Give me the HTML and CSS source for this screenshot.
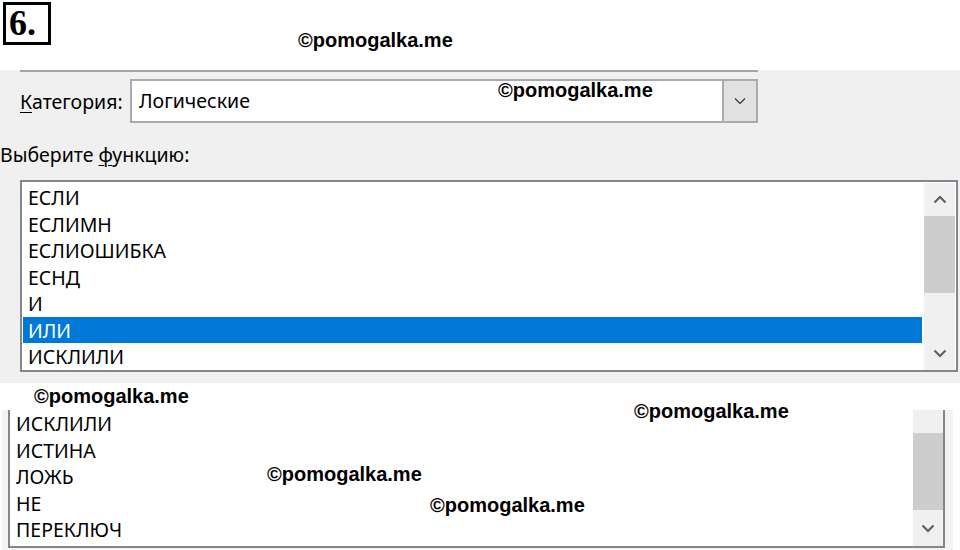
FILE: index.html
```html
<!DOCTYPE html>
<html lang="ru">
<head>
  <meta charset="UTF-8">
  <title>Вставка функции — Логические</title>
  <link rel="stylesheet" href="styles.css">
</head>
<body>
  <div class="page">
    <div class="task-num">6.</div>

    <!-- Function dialog, upper part -->
    <section class="dialog">
      <div class="rule"></div>
      <div class="cat-row">
        <span class="cat-label"><u>К</u>атегория:</span>
        <div class="combo">
          <span class="combo-value">Логические</span>
          <span class="combo-btn">
            <svg width="12" height="8" viewBox="0 0 12 8"><path d="M1 1.5 L6 6.5 L11 1.5" fill="none" stroke="#333" stroke-width="1.2"/></svg>
          </span>
        </div>
      </div>
      <div class="fn-label">Выберите <u>ф</u>ункцию:</div>
      <div class="listbox">
        <ul class="items">
          <li>ЕСЛИ</li>
          <li>ЕСЛИМН</li>
          <li>ЕСЛИОШИБКА</li>
          <li>ЕСНД</li>
          <li>И</li>
          <li class="selected">ИЛИ</li>
          <li>ИСКЛИЛИ</li>
        </ul>
        <div class="scrollbar">
          <span class="arrow">
            <svg width="14" height="9" viewBox="0 0 14 9"><path d="M1.5 7.5 L7 2 L12.5 7.5" fill="none" stroke="#606060" stroke-width="2.2"/></svg>
          </span>
          <span class="thumb"></span>
          <span class="track"></span>
          <span class="arrow">
            <svg width="14" height="9" viewBox="0 0 14 9"><path d="M1.5 1.5 L7 7 L12.5 1.5" fill="none" stroke="#606060" stroke-width="2.2"/></svg>
          </span>
        </div>
      </div>
    </section>

    <!-- Same list, scrolled down -->
    <section class="continued">
      <div class="listbox listbox-low">
        <ul class="items">
          <li>ИСКЛИЛИ</li>
          <li>ИСТИНА</li>
          <li>ЛОЖЬ</li>
          <li>НЕ</li>
          <li>ПЕРЕКЛЮЧ</li>
        </ul>
        <div class="scrollbar">
          <span class="track track-top"></span>
          <span class="thumb"></span>
          <span class="arrow">
            <svg width="14" height="9" viewBox="0 0 14 9"><path d="M1.5 1.5 L7 7 L12.5 1.5" fill="none" stroke="#606060" stroke-width="2.2"/></svg>
          </span>
        </div>
      </div>
    </section>

    <span class="mark mark-1">©pomogalka.me</span>
    <span class="mark mark-2">©pomogalka.me</span>
    <span class="mark mark-3">©pomogalka.me</span>
    <span class="mark mark-4">©pomogalka.me</span>
    <span class="mark mark-5">©pomogalka.me</span>
    <span class="mark mark-6">©pomogalka.me</span>
  </div>
</body>
</html>
```

FILE: styles.css
```css
/* Base */
body {
  margin: 0;
  background: #fff;
  color: #000;
  font-family: "Noto Sans", "Open Sans", sans-serif;
  font-size: 19.5px;
}

.page {
  position: relative;
  width: 960px;
  height: 550px;
  overflow: hidden;
}

/* Task number box */
.task-num {
  box-sizing: border-box;
  width: 48px;
  height: 43px;
  margin: 2px 0 25px 3px;
  border: 3px solid #000;
  font-family: "Liberation Serif", serif;
  font-weight: bold;
  font-size: 36px;
  line-height: 36px;
  padding-left: 3px;
}

/* Dialog panel */
.dialog {
  background: #f0f0f0;
  height: 313px;
}

.rule {
  margin-left: 20px;
  width: 738px;
  height: 2px;
  background: #a3a3ab;
}

.cat-row {
  display: flex;
  align-items: center;
  margin-top: 7px;
  padding-left: 20px;
}

.cat-label {
  width: 110px;
}

u {
  text-decoration-thickness: 1px;
  text-underline-offset: 3px;
}

.combo {
  box-sizing: border-box;
  display: flex;
  width: 628px;
  height: 44px;
  border: 2px solid #aaaab2;
  background: #fff;
}

.combo-value {
  flex: 1;
  padding-left: 7px;
  line-height: 40px;
}

.combo-btn {
  box-sizing: border-box;
  width: 34px;
  border-left: 2px solid #aaaab2;
  background: #e1e1e1;
  display: flex;
  align-items: center;
  justify-content: center;
}

.fn-label {
  margin: 21px 0 0 0;
  height: 36px;
  line-height: 22px;
}

/* List boxes */
.listbox {
  box-sizing: border-box;
  display: flex;
  margin-left: 20px;
  width: 938px;
  height: 192px;
  border: 2px solid #82868e;
  background: #fff;
}

.items {
  flex: 1;
  list-style: none;
  margin: 0;
  padding: 2px 2px 0 1px;
}

.items li {
  box-sizing: border-box;
  height: 26.5px;
  padding: 2px 0 0 5px;
  line-height: 24.5px;
}

.items li.selected {
  background: #0078d7;
  color: #fff;
}

.scrollbar {
  width: 31px;
  margin: 1px 1px 0 0;
  display: flex;
  flex-direction: column;
  background: #f0f0f0;
}

.arrow {
  height: 33px;
  display: flex;
  align-items: center;
  justify-content: center;
}

.thumb {
  height: 77px;
  background: #cdcdcd;
}

.track {
  flex: 1;
}

/* Lower, scrolled copy of the list */
.continued {
  box-sizing: border-box;
  margin: 27px 0 0 2px;
  width: 951px;
  height: 140px;
  background: #f3f3f3;
  padding-left: 6px;
}

.listbox-low {
  margin-left: 0;
  width: 937px;
  height: 138px;
  border-top: 0;
}

.listbox-low .items {
  padding: 0 2px 0 1px;
}

.listbox-low .scrollbar {
  width: 30px;
  margin: 0;
}

.listbox-low .track-top {
  flex: none;
  height: 23px;
}

.listbox-low .arrow {
  flex: 1;
}

/* Watermarks over the picture */
.mark {
  position: absolute;
  font-family: "Liberation Sans", Arial, sans-serif;
  font-weight: bold;
  font-size: 20px;
  line-height: 20px;
  color: #000;
  white-space: nowrap;
}

.mark-1 { left: 298px; top: 30px; }
.mark-2 { left: 498px; top: 80px; }
.mark-3 { left: 34px; top: 386px; }
.mark-4 { left: 634px; top: 401px; }
.mark-5 { left: 267px; top: 464px; }
.mark-6 { left: 430px; top: 495px; }
```
